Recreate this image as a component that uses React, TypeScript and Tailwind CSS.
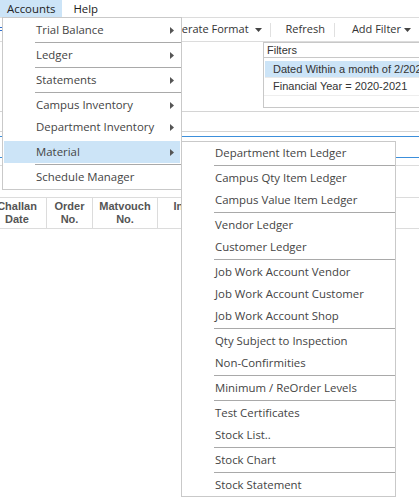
import React from 'react';

type Entry = { label: string; sub?: boolean; active?: boolean } | 'sep' | 'gap';

const accountsMenu: Entry[] = [
  { label: 'Trial Balance', sub: true },
  'sep',
  { label: 'Ledger', sub: true },
  'sep',
  { label: 'Statements', sub: true },
  'sep',
  { label: 'Campus Inventory', sub: true },
  { label: 'Department Inventory', sub: true },
  'gap',
  { label: 'Material', sub: true, active: true },
  'sep',
  { label: 'Schedule Manager' },
];

const materialMenu: Entry[] = [
  { label: 'Department Item Ledger' },
  'sep',
  { label: 'Campus Qty Item Ledger' },
  { label: 'Campus Value Item Ledger' },
  'sep',
  { label: 'Vendor Ledger' },
  { label: 'Customer Ledger' },
  'sep',
  { label: 'Job Work Account Vendor' },
  { label: 'Job Work Account Customer' },
  { label: 'Job Work Account Shop' },
  'sep',
  { label: 'Qty Subject to Inspection' },
  { label: 'Non-Confirmities' },
  'sep',
  { label: 'Minimum / ReOrder Levels' },
  'sep',
  { label: 'Test Certificates' },
  { label: 'Stock List..' },
  'sep',
  { label: 'Stock Chart' },
  'sep',
  { label: 'Stock Statement' },
];

function Caret({ gap }: { gap: string }) {
  return (
    <svg width="7" height="4" viewBox="0 0 7 4" className={`${gap} mt-[1px]`}>
      <polygon points="0,0 7,0 3.5,4" fill="#444" />
    </svg>
  );
}

function MenuList({ items }: { items: Entry[] }) {
  return (
    <>
      {items.map((it, i) => {
        if (it === 'sep') return <div key={i} className="ml-[32px] my-[1px] h-px bg-[#a9a9a9]" />;
        if (it === 'gap') return <div key={i} className="h-[3px]" />;
        return (
          <div
            key={i}
            className={`mx-[1px] h-[22px] flex items-center pl-[32px] pr-[6px] ${it.active ? 'bg-[#cce4f7]' : ''}`}
          >
            <span className="flex-1 whitespace-nowrap">{it.label}</span>
            {it.sub && (
              <svg width="4" height="7" viewBox="0 0 4 7">
                <polygon points="0,0 4,3.5 0,7" fill="#555" />
              </svg>
            )}
          </div>
        );
      })}
    </>
  );
}

export default function App() {
  return (
    <div className="relative w-[419px] h-[502px] overflow-hidden bg-white text-[#444] font-['Open_Sans',sans-serif] text-[11.4px]">
      {/* menu bar */}
      <div className="flex h-[18px] border-b border-[#dcdcdc]">
        <div className="h-[17px] px-[7px] flex items-center bg-[#cce4f7] text-[#222]">Accounts</div>
        <div className="h-[17px] px-[11px] flex items-center text-[#222]">Help</div>
      </div>

      {/* toolbar */}
      <div className="relative h-[24px] flex items-center justify-end pr-[8px] border-b border-[#dcdcdc] text-[#333] text-[11px]">
        <div className="absolute left-0 top-[9px] w-[3px] h-[4px] border-y border-[#2f6fd0]" />
        <div className="flex items-center whitespace-nowrap">
          Generate Format
          <Caret gap="ml-[6px]" />
        </div>
        <div className="ml-[8px] mr-[15px] w-px h-[14px] bg-[#e0e0e0]" />
        <div>Refresh</div>
        <div className="ml-[9px] mr-[17px] w-px h-[14px] bg-[#e0e0e0]" />
        <div className="flex items-center whitespace-nowrap">
          Add Filter
          <Caret gap="ml-[3px]" />
        </div>
      </div>

      {/* filters */}
      <div className="flex h-[70px] border-b border-[#d4d4d4] font-['Liberation_Sans',Arial,sans-serif] text-[11px] text-[#333]">
        <div className="flex-1" />
        <div className="w-[156px] flex flex-col">
          <div className="h-[16px] border border-[#c8c8c8] border-r-0 pl-[3px] flex items-center">Filters</div>
          <div className="h-[50px] border-l border-b border-[#c8c8c8] pt-[3px]">
            <div className="ml-[1px] h-[17px] bg-[#cce4f7] pl-[8px] flex items-center whitespace-nowrap border-b border-[#eaeaea]">
              Dated Within a month of 2/2021
            </div>
            <div className="h-[18px] pl-[9px] flex items-center whitespace-nowrap border-b border-[#eeeeee]">
              Financial Year = 2020-2021
            </div>
          </div>
        </div>
      </div>

      <div className="h-[20px] border-b border-[#d4d4d4]" />
      <div className="h-[5px] border-b border-[#3c8fdb]" />
      <div className="h-[21px] border-b border-[#3c8fdb]" />
      <div className="h-[8px] border-b border-[#dcdcdc]" />
      <div className="h-[31px]" />

      {/* table header */}
      <div className="flex h-[32px] border-y border-[#dcdcdc] font-['Liberation_Sans',Arial,sans-serif] font-bold text-[11px] leading-[13px] text-[#555] -ml-[12px]">
        <div className="w-[59px] border-r border-[#dcdcdc] flex items-center justify-center text-center">Challan<br />Date</div>
        <div className="w-[46px] border-r border-[#dcdcdc] flex items-center justify-center text-center">Order<br />No.</div>
        <div className="w-[65px] border-r border-[#dcdcdc] flex items-center justify-center text-center">Matvouch<br />No.</div>
        <div className="w-[70px] border-r border-[#dcdcdc] flex items-center justify-center text-center">Invoice<br />No.</div>
      </div>

      {/* Accounts dropdown */}
      <div className="absolute left-[2px] top-[17px] w-[180px] bg-white border border-[#c9c9c9] pt-[1px] pb-[1px]">
        <MenuList items={accountsMenu} />
      </div>

      {/* Material submenu */}
      <div className="absolute left-[181px] top-[141px] w-[215px] bg-white border border-[#c9c9c9]">
        <MenuList items={materialMenu} />
      </div>
    </div>
  );
}
